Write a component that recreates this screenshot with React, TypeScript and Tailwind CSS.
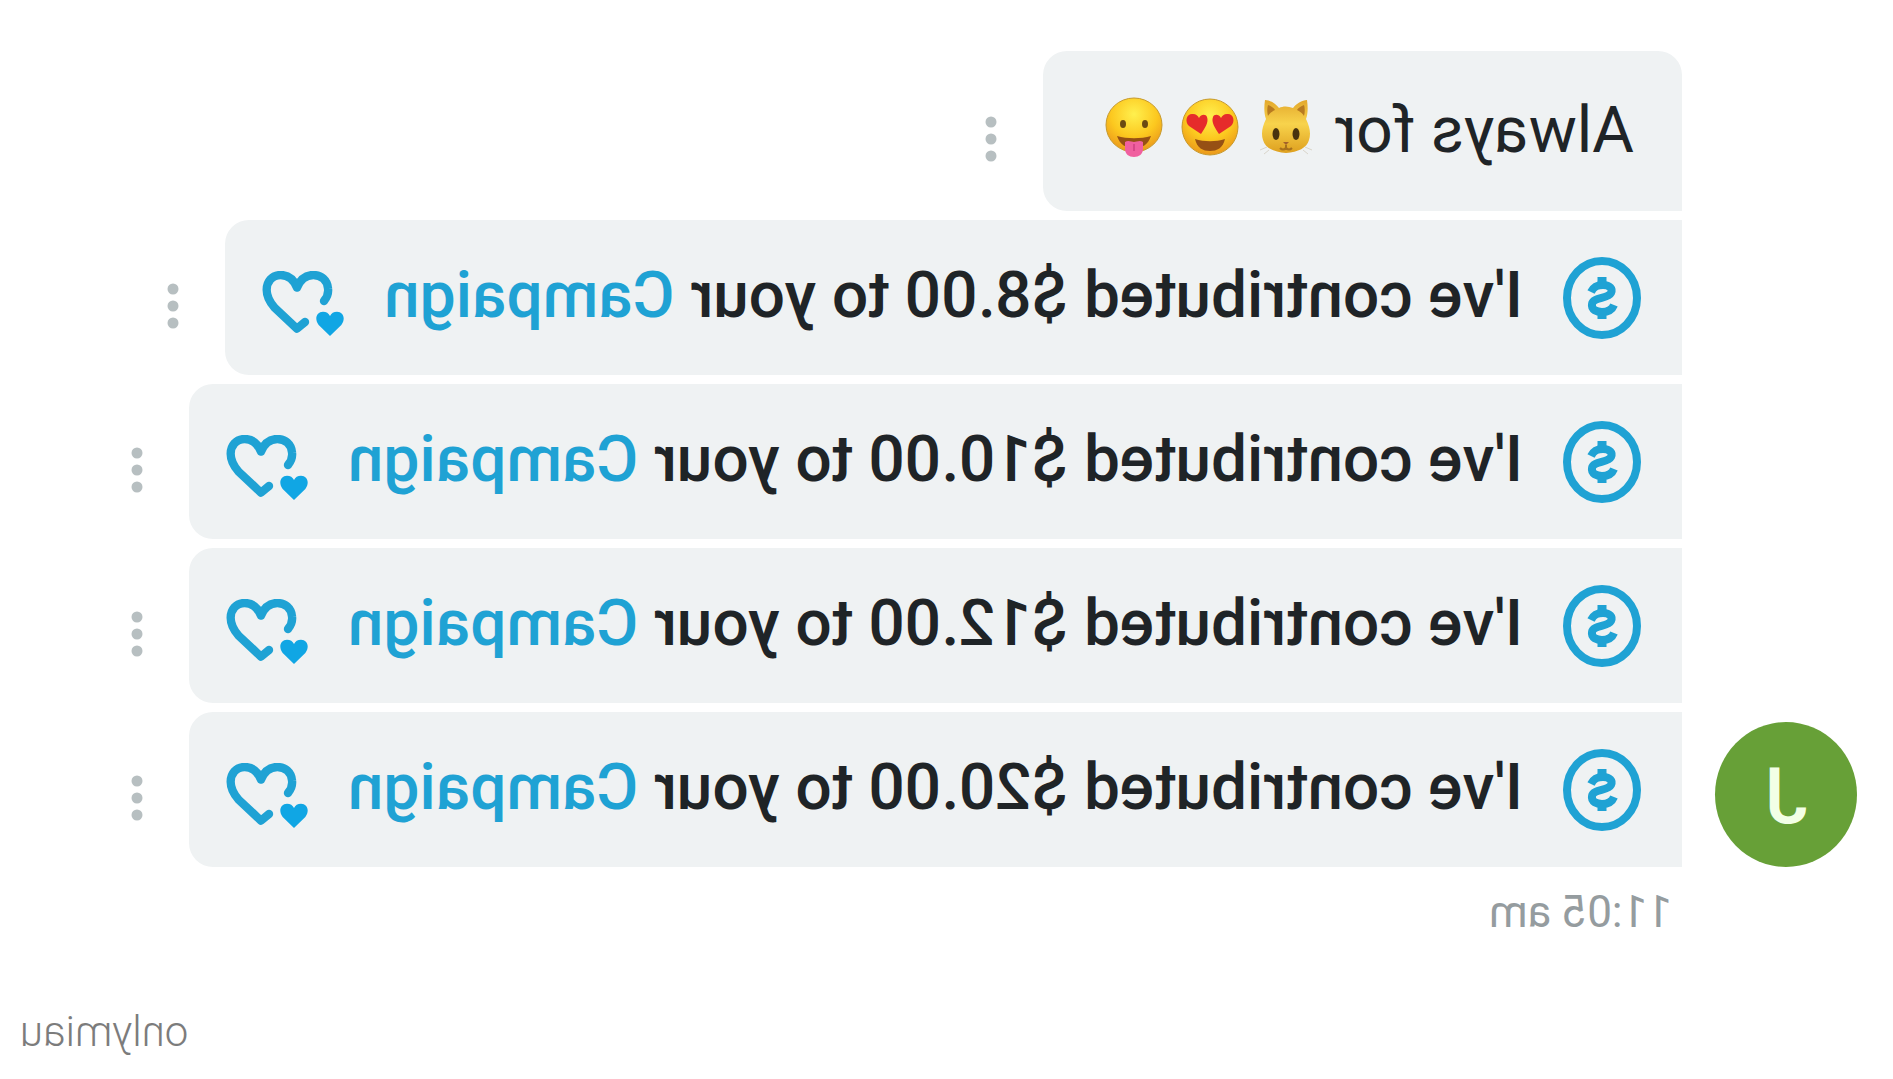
import React from "react";

const contributions = ["$8.00", "$10.00", "$12.00", "$20.00"];

const CoinIcon = () => (
  <svg className="h-[82px] w-[78px] shrink-0 text-[#1fa2d4]" viewBox="0 0 78 82" fill="none" stroke="currentColor" aria-hidden="true">
    <ellipse cx="39" cy="41" rx="35" ry="37" strokeWidth="8" />
    <path d="M50 35C47 29 43 28 38 28C31 28 28 32 30 36C33 42 48 40 49 47C50 53 44 55 39 55C33 55 29 53 27 48" strokeWidth="8" />
    <path d="M39 20v9M39 54v8" strokeWidth="9" />
  </svg>
);

const HeartsIcon = () => (
  <svg className="mt-3 h-[66px] w-[82px] shrink-0" viewBox="0 0 246 198" aria-hidden="true">
    <path
      d="M60 90C50 78 46 66 48 52C50 28 68 12 92 12C112 12 130 22 141 50C152 22 170 12 190 12C216 12 232 32 232 56C232 76 224 92 208 110L141 173L117 153"
      fill="none"
      stroke="#1fa2d4"
      strokeWidth="25"
      strokeLinecap="round"
      strokeLinejoin="round"
    />
    <path d="M127 36L141 22L155 36L141 58Z" fill="#1fa2d4" />
    <path d="M42 195L8 162C-6 144 2 122 21 122C31 122 38 126 42 135C46 126 53 122 63 122C82 122 90 144 76 162Z" fill="#10a6e4" />
  </svg>
);

const FaceGradient = ({ id }: { id: string }) => (
  <defs>
    <radialGradient id={id} cx="0.5" cy="0.3" r="0.75">
      <stop offset="0" stopColor="#fff04e" />
      <stop offset="0.55" stopColor="#fcc81f" />
      <stop offset="1" stopColor="#e8901a" />
    </radialGradient>
  </defs>
);

const CatEmoji = () => (
  <svg className="h-[60px] w-[58px]" viewBox="0 0 58 60" role="img" aria-label="cat">
    <defs>
      <linearGradient id="cat" x1="0" y1="0" x2="0" y2="1">
        <stop offset="0" stopColor="#e3a82c" />
        <stop offset="0.45" stopColor="#f8d34c" />
        <stop offset="1" stopColor="#dea01f" />
      </linearGradient>
    </defs>
    <path d="M8 3C13 3 19 7 22 11C27 9 32 9 36 11C39 7 45 3 50 3C51 10 51 17 49 22C53 30 54 37 52 43C50 51 41 55 29 56C17 55 8 51 6 43C4 37 5 30 9 22C7 17 7 10 8 3Z" fill="url(#cat)" />
    <path d="M11 8C14 9 17 11 18 13C14 15 12 17 11 19C10 15 10 11 11 8ZM47 8C44 9 41 11 40 13C44 15 46 17 47 19C48 15 48 11 47 8Z" fill="#b87a20" />
    <ellipse cx="19" cy="37" rx="3.5" ry="6" fill="#49330f" />
    <ellipse cx="39" cy="37" rx="3.5" ry="6" fill="#49330f" />
    <path d="M26 45H32L29 48Z" fill="#a4622b" />
    <path d="M29 48v3M23 51Q26 54 29 51Q32 54 35 51" fill="none" stroke="#a8711c" strokeWidth="2" />
    <path d="M10 50L3 53M12 53L7 57M48 50L55 53M46 53L51 57" stroke="#d9d5ca" strokeWidth="1" />
  </svg>
);

const LoveEmoji = () => (
  <svg className="h-[60px] w-[58px]" viewBox="0 0 58 60" role="img" aria-label="heart eyes">
    <FaceGradient id="love" />
    <ellipse cx="29" cy="30" rx="28" ry="28" fill="url(#love)" stroke="#c79a2c" />
    <path d="M20 37L8 29C3 24 6 16 12 17C15 17 17 19 18 21C20 17 25 17 26 20C28 25 24 31 20 37Z" fill="#e62b2b" />
    <path d="M38 37L50 29C55 24 52 16 46 17C43 17 41 19 40 21C38 17 33 17 32 20C30 25 34 31 38 37Z" fill="#e62b2b" />
    <path d="M14 42C23 45 35 45 44 42C42 51 36 54 29 54C22 54 16 51 14 42Z" fill="#965014" />
  </svg>
);

const TongueEmoji = () => (
  <svg className="h-[60px] w-[58px]" viewBox="0 0 58 60" role="img" aria-label="tongue out">
    <FaceGradient id="tongue" />
    <ellipse cx="29" cy="28" rx="28" ry="27" fill="url(#tongue)" stroke="#c79a2c" />
    <ellipse cx="18" cy="27" rx="3" ry="4" fill="#6b4a12" />
    <ellipse cx="40" cy="27" rx="3" ry="4" fill="#6b4a12" />
    <path d="M12 39C22 42 36 42 46 39C43 48 37 51 29 51C21 51 15 48 12 39Z" fill="#965014" />
    <path d="M20 45C23 43 27 45 29 45C31 45 35 43 38 45V52C38 57 34 60 29 60C24 60 20 57 20 52Z" fill="#f0609f" />
    <path d="M29 47v7" stroke="#cf3f80" strokeWidth="1.5" />
  </svg>
);

const MoreButton = () => (
  <button type="button" aria-label="More options" className="ml-10 shrink-0 px-1 pt-4">
    <svg className="h-[46px] w-4" viewBox="0 0 16 46" fill="#b7bfc1" aria-hidden="true">
      <circle cx="8" cy="6" r="5.5" />
      <circle cx="8" cy="23" r="5.5" />
      <circle cx="8" cy="40" r="5.5" />
    </svg>
  </button>
);

export default function App() {
  return (
    // The whole conversation is shown flipped left to right
    <main className="flex min-h-screen -scale-x-100 flex-col overflow-hidden bg-white pt-[51px] font-['Roboto',sans-serif] text-[#1f2427]">
      <section className="flex items-end gap-[33px] pl-9">
        <div className="flex h-[145px] w-[142px] shrink-0 items-center justify-center rounded-[50%] bg-[#67a037] pt-1 text-[78px] font-medium text-[#f2ffe6]">
          J
        </div>
        <ul className="flex flex-col gap-[9px] whitespace-nowrap">
          <li className="flex items-center">
            <div className="flex h-40 items-center rounded-3xl rounded-bl-none bg-[#eff2f3] pl-12 pr-[62px] text-[64px]">
              <p>Always for</p>
              <span className="mb-2 ml-5 flex gap-[18px]">
                <CatEmoji />
                <LoveEmoji />
                <TongueEmoji />
              </span>
            </div>
            <MoreButton />
          </li>
          {contributions.map((amount) => (
            <li key={amount} className="flex items-center">
              <div className="flex h-[155px] items-center rounded-r-3xl bg-[#eff2f3] pl-[41px] pr-[37px] text-[64px] font-medium">
                <CoinIcon />
                <p className="mx-10 pb-1">
                  I've contributed {amount} to your{" "}
                  <a href="#campaign" className="text-[#1fa2d4]">
                    Campaign
                  </a>
                </p>
                <HeartsIcon />
              </div>
              <MoreButton />
            </li>
          ))}
        </ul>
      </section>
      <time className="ml-[221px] mt-3 text-[44px] text-[#959c9f]">11:05 am</time>
      <footer className="mt-auto pb-4 pr-5 text-right text-[42px] font-light text-[#7c7c7c]">onlymiau</footer>
    </main>
  );
}
